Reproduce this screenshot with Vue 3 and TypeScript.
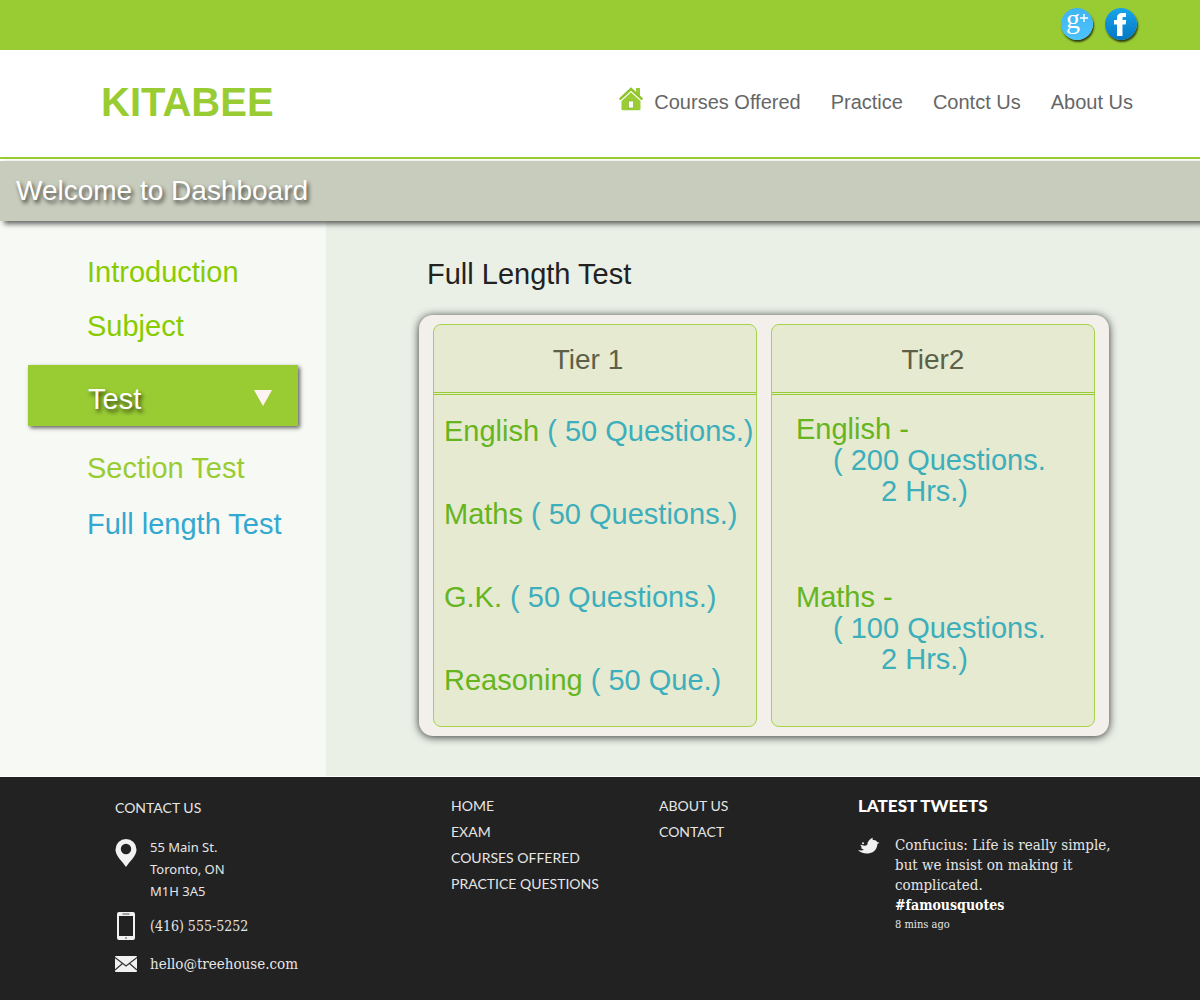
<script setup lang="ts">
import { ref } from 'vue'

interface Section {
  subject: string
  detail: string
}

interface Paper {
  subject: string
  questions: string
  duration: string
}

const navLinks: string[] = ['Courses Offered', 'Practice', 'Contct Us', 'About Us']

const sections: Section[] = [
  { subject: 'English', detail: '( 50 Questions.)' },
  { subject: 'Maths', detail: '( 50 Questions.)' },
  { subject: 'G.K.', detail: '( 50 Questions.)' },
  { subject: 'Reasoning', detail: '( 50 Que.)' },
]

const papers: Paper[] = [
  { subject: 'English -', questions: '( 200 Questions.', duration: '2 Hrs.)' },
  { subject: 'Maths -', questions: '( 100 Questions.', duration: '2 Hrs.)' },
]

const siteLinks: string[] = ['HOME', 'EXAM', 'COURSES OFFERED', 'PRACTICE QUESTIONS']
const aboutLinks: string[] = ['ABOUT US', 'CONTACT']

const testOpen = ref(true)
</script>

<template>
  <div class="page">
    <div class="topbar">
      <a href="#" class="social" aria-label="Google Plus">
        <svg width="32" height="32" viewBox="0 0 32 32">
          <defs>
            <linearGradient id="gp" x1="0" y1="0" x2="0" y2="1">
              <stop offset="0" stop-color="#3fb4f2" />
              <stop offset="1" stop-color="#4cc3ff" />
            </linearGradient>
          </defs>
          <circle cx="16" cy="16" r="16" fill="url(#gp)" />
          <text x="5" y="20" class="g-letter">g</text>
          <path d="M19 10h8M23 6v8" stroke="#fff" stroke-width="1.400" />
        </svg>
      </a>
      <a href="#" class="social" aria-label="Facebook">
        <svg width="32" height="32" viewBox="0 0 32 32">
          <defs>
            <linearGradient id="fb" x1="0" y1="0" x2="0" y2="1">
              <stop offset="0" stop-color="#18a5e8" />
              <stop offset="1" stop-color="#0576c6" />
            </linearGradient>
          </defs>
          <circle cx="16" cy="16" r="16" fill="url(#fb)" />
          <path
            d="M12 28V16.500H9V12h3v-1.800C12 6.500 14 5 17.500 5H21v4h-2.200c-.9 0-1.300.5-1.300 1.300V12h3.700l-.5 4.500h-3.200V28z"
            fill="#fff"
          />
        </svg>
      </a>
    </div>

    <header class="header">
      <a href="#" class="brand">KITABEE</a>
      <nav class="nav">
        <a href="#" class="home" aria-label="Home">
          <svg width="24" height="24" viewBox="0 0 24 24">
            <path d="M17 1h4v9l-4-4z" fill="#9acc33" />
            <path d="M2.500 11.500 12 3l9.500 8.500V22a1.200 1.200 0 0 1-1.200 1.200H3.700A1.200 1.200 0 0 1 2.500 22z" fill="#9acc33" />
            <path d="M1.500 12.800 12 3l10.500 9.800" fill="none" stroke="#fff" stroke-width="3.200" />
            <path d="M1.300 11.800 12 2l10.700 9.800" fill="none" stroke="#8cc427" stroke-width="2.400" stroke-linecap="round" />
            <rect x="9.500" y="14" width="5" height="7" fill="#fff" stroke="#7ba82e" stroke-width=".6" />
          </svg>
        </a>
        <a v-for="link in navLinks" :key="link" href="#" class="nav-link">{{ link }}</a>
      </nav>
    </header>

    <div class="banner">
      <h1>Welcome to Dashboard</h1>
    </div>

    <div class="body">
      <aside class="sidebar">
        <a href="#" class="side-link">Introduction</a>
        <a href="#" class="side-link">Subject</a>
        <button type="button" class="side-toggle" :aria-expanded="testOpen" @click="testOpen = !testOpen">
          <span>Test</span>
          <svg width="18" height="16" viewBox="0 0 18 16"><path d="M0 0h18L9 16z" fill="#fff3f1" /></svg>
        </button>
        <template v-if="testOpen">
          <a href="#" class="sub-link">Section Test</a>
          <a href="#" class="sub-link current">Full length Test</a>
        </template>
      </aside>

      <main class="content">
        <h2>Full Length Test</h2>
        <div class="panel">
          <section class="tier">
            <h3 class="tier-title tier-title-left">Tier 1</h3>
            <ul class="sections">
              <li v-for="s in sections" :key="s.subject">
                {{ s.subject }} <span class="detail">{{ s.detail }}</span>
              </li>
            </ul>
          </section>
          <section class="tier">
            <h3 class="tier-title">Tier2</h3>
            <ul class="papers">
              <li v-for="p in papers" :key="p.subject">
                {{ p.subject }}
                <span class="detail questions">{{ p.questions }}</span>
                <span class="detail duration">{{ p.duration }}</span>
              </li>
            </ul>
          </section>
        </div>
      </main>
    </div>

    <footer class="footer">
      <section class="contact">
        <h4>CONTACT US</h4>
        <div class="contact-row address">
          <svg width="22" height="28" viewBox="0 0 22 28">
            <path
              d="M11 0a10.500 10.500 0 0 0-10.500 10.500C.5 17 7.500 22.500 11 28c3.500-5.500 10.500-11 10.500-17.500A10.500 10.500 0 0 0 11 0zm0 4.800a5.200 5.200 0 1 1 0 10.400 5.200 5.200 0 0 1 0-10.400z"
              fill="#f1f1f1"
              fill-rule="evenodd"
            />
          </svg>
          <address>55 Main St.<br />Toronto, ON<br />M1H 3A5</address>
        </div>
        <div class="contact-row phone">
          <svg width="22" height="28" viewBox="0 0 22 28">
            <path
              d="M4 0h14a2 2 0 0 1 2 2v24a2 2 0 0 1-2 2H4a2 2 0 0 1-2-2V2a2 2 0 0 1 2-2zm0 4v20h14V4z"
              fill="#f1f1f1"
              fill-rule="evenodd"
            />
            <path d="M7.500 2h7M10 26h2" stroke="#555" stroke-width="1.200" />
          </svg>
          <a href="tel:4165555252">(416) 555-5252</a>
        </div>
        <div class="contact-row mail">
          <svg width="22" height="16" viewBox="0 0 22 16">
            <rect width="22" height="16" rx="1" fill="#f1f1f1" />
            <path d="M0 1.500 11 10l11-8.500M0 14l7.500-6.500M22 14l-7.500-6.500" fill="none" stroke="#333" stroke-width="1.200" />
          </svg>
          <a href="mailto:hello@treehouse.com">hello@treehouse.com</a>
        </div>
      </section>

      <nav class="links">
        <a v-for="l in siteLinks" :key="l" href="#">{{ l }}</a>
      </nav>
      <nav class="links">
        <a v-for="l in aboutLinks" :key="l" href="#">{{ l }}</a>
      </nav>

      <section class="tweets">
        <h4>LATEST TWEETS</h4>
        <div class="tweet">
          <svg width="22" height="18" viewBox="0 0 22 18">
            <path
              d="M14.500.8c.3.900.2 1.700.2 2.400 1.800-.5 3.800.2 4.400 1.900l2.400.6-2.100 1.300c-.2 4.800-3.200 8.500-8 9.300-4.500.7-9-.3-11.400-3.200 2.500.8 4.600.6 6-.5-1.600-.2-2.700-.9-3.100-2l1.500-.4C3.100 9.800 2.500 8.800 2.700 7.800l1.800.5c1.500.6 3.200.5 4.700-.3C9.300 5 11.500 2 14.500.8z"
              fill="#f1f1f1"
            />
            <circle cx="5" cy="6.300" r="1" fill="#f1f1f1" />
          </svg>
          <div>
            <p>Confucius: Life is really simple, but we insist on making it complicated.</p>
            <a href="#">#famousquotes</a>
            <small>8 mins ago</small>
          </div>
        </div>
      </section>
    </footer>
  </div>
</template>

<style>
body {
  margin: 0;
}
</style>

<style scoped>
.page {
  font-family: 'Liberation Sans', Arial, sans-serif;
  background: #fff;
}
a {
  color: inherit;
  text-decoration: none;
}
h1, h2, h3, h4, p, ul {
  margin: 0;
  padding: 0;
  font-weight: normal;
}
ul {
  list-style: none;
}
svg {
  display: block;
  flex: none;
  overflow: visible;
}
.topbar {
  display: flex;
  justify-content: flex-end;
  align-items: center;
  gap: 12px;
  box-sizing: border-box;
  height: 50px;
  padding: 0 63px 2px 0;
  background: #9c3;
}
.social {
  border-radius: 50%;
  box-shadow: 1px 2px 2px rgba(0, 0, 0, 0.7);
}
.g-letter {
  font-family: 'Liberation Serif', serif;
  font-size: 28px;
  fill: #fff;
}
.header {
  display: flex;
  justify-content: space-between;
  align-items: center;
  padding: 0 67px 3px 101px;
  min-height: 104px;
  border-bottom: 2px solid #9c3;
}
.brand {
  font-size: 40px;
  font-weight: bold;
  color: #9c3;
}
.nav {
  display: flex;
  align-items: center;
  gap: 30px;
  font-size: 20px;
  color: #666;
}
.home {
  margin: 0 -19px 6px 0;
}
.banner {
  position: relative;
  margin-top: 2px;
  padding: 14px 16px;
  background: #c8ccbc;
  box-shadow: 4px 3px 5px rgba(0, 0, 0, 0.6);
}
.banner h1 {
  font-size: 28px;
  line-height: 32px;
  color: #fff;
  text-shadow: 2px 3px 4px rgba(0, 0, 0, 0.7);
}
.body {
  display: flex;
  font-size: 29px;
}
.sidebar {
  display: flex;
  flex-direction: column;
  flex: 0 0 326px;
  box-sizing: border-box;
  padding-top: 24px;
  background: #f7f9f4;
}
.side-link,
.sub-link {
  padding-left: 87px;
}
.side-link {
  line-height: 54px;
  color: #8c0;
}
.side-toggle {
  display: flex;
  justify-content: space-between;
  align-items: center;
  margin: 12px 28px 14px;
  padding: 8px 26px 0 60px;
  height: 61px;
  border: 0;
  background: #9c3;
  box-shadow: 2px 2px 4px rgba(0, 0, 0, 0.6);
  font: inherit;
  color: #fff;
  text-shadow: 2px 3px 4px rgba(0, 0, 0, 0.7);
}
.side-toggle svg {
  margin-bottom: 4px;
}
.sub-link {
  line-height: 56px;
  color: #9c3;
}
.sub-link.current {
  color: #33a8d0;
}
.content {
  flex: 1;
  padding: 36px 91px 40px 93px;
  background: #eaf0e6;
}
.content h2 {
  margin-bottom: 24px;
  padding-left: 8px;
  font-size: 29px;
  line-height: 34px;
  color: #222;
}
.panel {
  display: flex;
  gap: 14px;
  padding: 9px 14px;
  border-radius: 14px;
  background: #f3f0eb;
  box-shadow: 0 1px 8px rgba(0, 0, 0, 0.8);
}
.tier {
  flex: 1;
  border: 1px solid #a5d34b;
  border-radius: 8px;
  background: #e5ead0;
}
.tier-title {
  padding-top: 2px;
  border-bottom: 3px double #9c3;
  font-size: 28px;
  line-height: 65px;
  text-align: center;
  color: #5c6048;
}
.tier-title-left {
  padding-right: 14px;
}
.sections,
.papers {
  display: flex;
  flex-direction: column;
  line-height: 31px;
  color: #66b51e;
}
.sections {
  gap: 52px;
  padding: 21px 0 30px 10px;
  white-space: nowrap;
}
.papers {
  gap: 75px;
  padding: 19px 0 20px 24px;
}
.detail {
  color: #3daebb;
}
.questions,
.duration {
  display: block;
}
.questions {
  padding-left: 37px;
}
.duration {
  padding-left: 85px;
}
.footer {
  display: grid;
  grid-template-columns: 336fr 208fr 199fr 342fr;
  box-sizing: border-box;
  margin-top: 1px;
  min-height: 223px;
  padding: 16px 0 16px 115px;
  background: #222;
  color: #e6e6e6;
  font-size: 15px;
}
.contact h4,
.links {
  font-family: Lato, sans-serif;
  font-size: 14px;
  line-height: 26px;
}
.contact h4 {
  padding-top: 2px;
}
.links {
  display: flex;
  flex-direction: column;
}
.contact-row {
  display: flex;
  align-items: center;
  gap: 13px;
  font-family: 'DejaVu Serif Condensed', 'DejaVu Serif', serif;
  font-size: 14px;
}
.address {
  align-items: flex-start;
  margin-top: 15px;
}
.address svg {
  margin-top: 3px;
}
address {
  font-family: 'Noto Sans', sans-serif;
  font-size: 13px;
  font-style: normal;
  line-height: 22px;
}
.phone {
  margin-top: 10px;
}
.mail {
  margin-top: 15px;
  font-size: 15px;
}
.tweets {
  padding-right: 80px;
}
.tweets h4 {
  font-family: Lato, sans-serif;
  font-size: 17px;
  font-weight: 900;
  line-height: 26px;
  color: #fff;
}
.tweet {
  display: flex;
  gap: 15px;
  margin-top: 16px;
  font-family: 'DejaVu Serif Condensed', 'DejaVu Serif', serif;
  font-size: 15px;
  line-height: 20px;
}
.tweet svg {
  margin-top: 2px;
}
.tweet a {
  display: block;
  font-size: 14px;
  font-weight: bold;
  color: #fff;
}
.tweet small {
  display: block;
  font-size: 11px;
}
</style>
